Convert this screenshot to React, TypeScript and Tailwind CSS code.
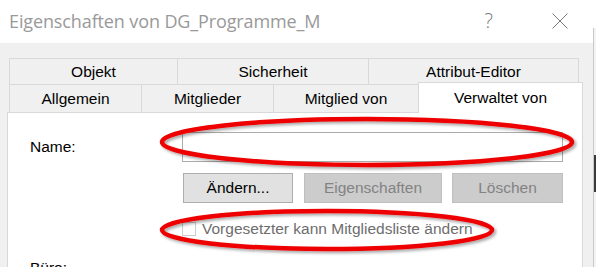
import React from "react";

const tabBase =
  "flex items-center justify-center border-t border-l border-[#d9d9d9] bg-[#f0f0f0] text-black";

export default function App() {
  return (
    <div className="relative w-[596px] h-[267px] overflow-hidden bg-white flex font-['Liberation_Sans',Arial,sans-serif] text-[15.5px] leading-[18px]">
      <div className="w-[593px] flex flex-col shrink-0">
        {/* Title bar */}
        <div className="h-[43px] shrink-0 bg-white flex items-center">
          <span className="ml-[9px] -mt-[1px] text-[18px] leading-[24px] text-[#999999] font-['Open_Sans','Noto_Sans',sans-serif] tracking-[-0.12px]">
            Eigenschaften von DG_Programme_M
          </span>
          <span className="ml-auto mr-[59px] -mt-[1px] text-[20px] leading-[24px] text-[#7a7a7a] font-light font-['Open_Sans',sans-serif]">
            ?
          </span>
          <svg width="16" height="16" viewBox="0 0 16 16" className="mr-[25px] -mt-[1px]">
            <path d="M0.5 0.5 L15.5 15.5 M15.5 0.5 L0.5 15.5" stroke="#7a7a7a" strokeWidth="1" fill="none" />
          </svg>
        </div>
        {/* Body */}
        <div className="flex-1 bg-[#f0f0f0] pl-[7px] pt-[15px] flex flex-col">
          {/* top tab row */}
          <div className="ml-[2px] flex h-[26px]">
            <div className={`${tabBase} w-[168px]`}>Objekt</div>
            <div className={`${tabBase} w-[191px]`}>Sicherheit</div>
            <div className={`${tabBase} w-[211px] border-r`}>Attribut-Editor</div>
          </div>
          {/* bottom tab row */}
          <div className="ml-[2px] flex h-[28px] items-start">
            <div className={`${tabBase} w-[132px] h-[28px]`}>Allgemein</div>
            <div className={`${tabBase} w-[132px] h-[28px]`}>Mitglieder</div>
            <div className={`${tabBase} w-[145px] h-[28px]`}>Mitglied von</div>
            <div className="relative z-10 -mt-[2px] w-[165px] h-[31px] bg-white border border-b-0 border-[#d9d9d9] flex items-center justify-center pb-[1px] text-black">
              Verwaltet von
            </div>
          </div>
          {/* panel */}
          <div className="w-[576px] flex-1 bg-white border border-[#d9d9d9] pl-[22px] pt-[19px] flex flex-col">
            <div className="flex items-center">
              <div className="w-[152px] text-black">Name:</div>
              <div className="w-[381px] h-[30px] border border-[#ababab] bg-white" />
            </div>
            <div className="mt-[11px] ml-[153px] flex">
              <div className="w-[110px] h-[30px] bg-[#e1e1e1] border border-[#adadad] flex items-center justify-center text-black">
                Ändern...
              </div>
              <div className="ml-[11px] w-[138px] h-[30px] bg-[#cccccc] border border-[#bfbfbf] flex items-center justify-center text-[#838383]">
                Eigenschaften
              </div>
              <div className="ml-[10px] w-[111px] h-[30px] bg-[#cccccc] border border-[#bfbfbf] flex items-center justify-center text-[#838383]">
                Löschen
              </div>
            </div>
            <div className="mt-[17px] ml-[152px] h-[18px] flex items-center">
              <div className="w-[14px] h-[14px] border border-[#cccccc] bg-white" />
              <span className="ml-[6px] text-[#6d6d6d]">Vorgesetzter kann Mitgliedsliste ändern</span>
            </div>
            <div className="mt-[21px] text-black">Büro:</div>
          </div>
        </div>
      </div>
      {/* window edge */}
      <div className="w-[3px] flex flex-col">
        <div className="h-[28px] bg-white" />
        <div className="flex-1 border-l border-[#c8c8c8] flex flex-col">
          <div className="h-[127px] bg-[#f4f4f4]" />
          <div className="h-[37px] bg-[#3a3a3a]" />
          <div className="flex-1 bg-[#f4f4f4]" />
        </div>
      </div>
      {/* red annotation ellipses */}
      <svg className="absolute inset-0 pointer-events-none" width="596" height="267" viewBox="0 0 596 267">
        <defs>
          <filter id="sh" x="-10%" y="-30%" width="120%" height="160%">
            <feDropShadow dx="2" dy="2" stdDeviation="1.5" floodColor="#000" floodOpacity="0.35" />
          </filter>
        </defs>
        <ellipse cx="367" cy="142" rx="205" ry="23" fill="none" stroke="#ee0000" strokeWidth="4.5" filter="url(#sh)" />
        <ellipse cx="327" cy="230" rx="165" ry="19" fill="none" stroke="#ee0000" strokeWidth="4.5" filter="url(#sh)" />
      </svg>
    </div>
  );
}
